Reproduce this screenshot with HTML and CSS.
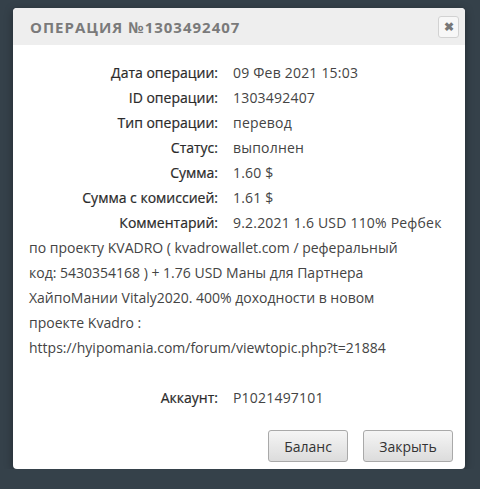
FILE: index.html
```html
<!DOCTYPE html>
<html>
<head>
  <meta charset="UTF-8">
  <title>Операция №1303492407</title>
  <link rel="stylesheet" href="styles.css">
</head>
<body>
  <div class="dialog">
    <div class="dialog-head">
      <span class="dialog-title">Операция №1303492407</span>
      <span class="close-btn">&#10006;</span>
    </div>
    <div class="dialog-body">
      <div class="row"><span class="label">Дата операции:</span><span class="value">09 Фев 2021 15:03</span></div>
      <div class="row"><span class="label">ID операции:</span><span class="value">1303492407</span></div>
      <div class="row"><span class="label">Тип операции:</span><span class="value">перевод</span></div>
      <div class="row"><span class="label">Статус:</span><span class="value">выполнен</span></div>
      <div class="row"><span class="label">Сумма:</span><span class="value">1.60 $</span></div>
      <div class="row"><span class="label">Сумма с комиссией:</span><span class="value">1.61 $</span></div>
      <div class="comment"><span class="label">Комментарий:</span><span class="value">9.2.2021 1.6 USD 110% Рефбек</span><br>по проекту KVADRO ( kvadrowallet.com / реферальный<br>код: 5430354168 ) + 1.76 USD Маны для Партнера<br>ХайпоМании Vitaly2020. 400% доходности в новом<br>проекте Kvadro :<br>https://hyipomania.com/forum/viewtopic.php?t=21884</div>
      <div class="row account"><span class="label">Аккаунт:</span><span class="value">P1021497101</span></div>
    </div>
    <div class="dialog-foot">
      <button class="btn">Баланс</button>
      <button class="btn btn-wide">Закрыть</button>
    </div>
  </div>
</body>
</html>
```

FILE: styles.css
```css
body {
  margin: 0;
  background: #35414a;
  font-family: "Open Sans", "Liberation Sans", sans-serif;
  font-size: 14px;
  color: #444;
}

.dialog {
  margin: 8px 0 0 13px;
  width: 452px;
  height: 461px;
  background: #fff;
  border-radius: 4px;
  box-shadow: 0 2px 8px rgba(0, 0, 0, 0.35);
  display: flex;
  flex-direction: column;
}

.dialog-head {
  height: 37px;
  background: #eeeeee;
  border-radius: 4px 4px 0 0;
  display: flex;
  align-items: center;
  justify-content: space-between;
  padding: 0 6px 0 17px;
}

.dialog-title {
  text-transform: uppercase;
  font-weight: bold;
  font-size: 15px;
  letter-spacing: 1px;
  color: #7a7a7a;
}

.close-btn {
  width: 19px;
  height: 20px;
  border: 1px solid #d2d2d2;
  border-radius: 3px;
  background: #f7f7f7;
  color: #777;
  font-size: 12px;
  font-weight: bold;
  display: flex;
  align-items: center;
  justify-content: center;
}

.dialog-body {
  padding: 15px 16px 0 16px;
  flex: 1;
  line-height: 25px;
}

.label {
  display: inline-block;
  width: 189px;
  text-align: right;
  color: #2a2a2a;
  margin-right: 15px;
  -webkit-text-stroke: 0.2px #2a2a2a;
}

.value {
  letter-spacing: 0.2px;
}

.comment {
  line-height: 25px;
}

.account {
  margin-top: 25px;
}

.dialog-foot {
  display: flex;
  justify-content: flex-end;
  gap: 15px;
  padding: 0 12px 7px 0;
}

.btn {
  width: 80px;
  height: 32px;
  font-family: "Open Sans", "Liberation Sans", sans-serif;
  font-size: 14px;
  color: #333;
  border: 1px solid #a9a9a9;
  border-radius: 3px;
  background: linear-gradient(#f5f5f5, #dcdcdc);
}

.btn-wide {
  width: 90px;
}
```
